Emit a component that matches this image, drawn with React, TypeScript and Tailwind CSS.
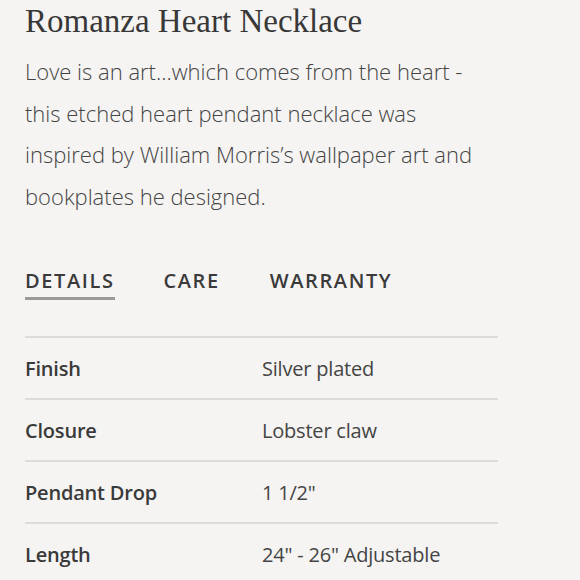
import React from "react";

const rows = [
  ["Finish", "Silver plated"],
  ["Closure", "Lobster claw"],
  ["Pendant Drop", '1 1/2"'],
  ["Length", '24" - 26" Adjustable'],
];

export default function App() {
  return (
    <div className="w-[580px] h-[580px] overflow-hidden bg-[#f5f4f2] text-[#3a3a3a]">
      <div className="px-[25px] w-[523px]">
        <h1 className="pt-[1px] text-[33px] leading-[40px] text-[#383838]" style={{ fontFamily: '"Liberation Serif", "DejaVu Serif", serif' }}>
          Romanza Heart Necklace
        </h1>
        <p className="mt-[10px] text-[22px] leading-[41.5px] font-light text-[#444] w-[448px]" style={{ fontFamily: '"Open Sans", sans-serif' }}>
          Love is an art…which comes from the heart - this etched heart pendant necklace was inspired by William Morris’s wallpaper art and bookplates he designed.
        </p>
        <div className="mt-[50px] flex text-[20px] font-semibold tracking-[1.6px] text-[#3a3a3a]" style={{ fontFamily: '"Open Sans", sans-serif' }}>
          <div className="border-b-[3px] border-[#999] pb-[2px] leading-[28px]">DETAILS</div>
          <div className="ml-[49px] leading-[28px]">CARE</div>
          <div className="ml-[50px] leading-[28px]">WARRANTY</div>
        </div>
        <div className="mt-[36px] border-t-2 border-[#dddcda]" style={{ fontFamily: '"Open Sans", sans-serif' }}>
          {rows.map(([k, v]) => (
            <div key={k} className="h-[62px] border-b-2 border-[#dddcda] flex items-center text-[20px] pt-[2px]">
              <div className="w-[237px] font-semibold text-[#3a3a3a] tracking-[-0.2px]">{k}</div>
              <div className="text-[#444] tracking-[-0.2px]">{v}</div>
            </div>
          ))}
        </div>
      </div>
    </div>
  );
}
